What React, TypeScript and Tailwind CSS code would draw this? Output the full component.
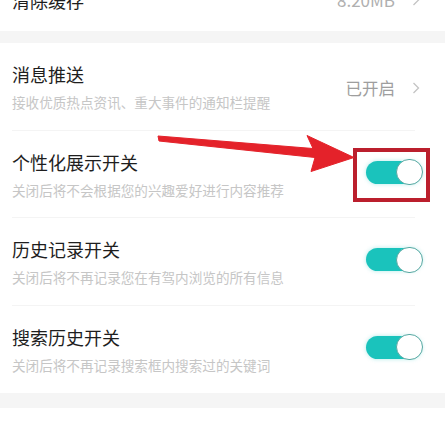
import { ReactNode } from 'react';

const font = { fontFamily: '"Noto Sans CJK SC", "Noto Sans", sans-serif' };

const Chevron = () => (
  <svg width="8" height="12" viewBox="0 0 8 12" className="ml-[17px]">
    <polyline points="1.5,1 6.5,6 1.5,11" fill="none" stroke="#c4c4c4" strokeWidth="1.3" />
  </svg>
);

const Toggle = () => (
  <div className="-mt-[4px] flex h-[23px] w-[56px] items-center justify-end rounded-full bg-[#1ac3bc] shadow-[0_0_4px_rgba(26,195,188,0.35)]">
    <div className="-mr-[1px] h-[26px] w-[27px] rounded-full border border-[#58a8a2] bg-white" />
  </div>
);

type RowProps = {
  title: string;
  desc: string;
  right: ReactNode;
  divider?: boolean;
};

const Row = ({ title, desc, right, divider }: RowProps) => (
  <div className="relative flex h-[87.5px] items-center pl-3 pr-[23px]">
    <div className="flex flex-1 flex-col">
      <div className="text-[18px] leading-[24px] text-[#1e1e1e]">{title}</div>
      <div className="mt-[7px] text-[13.6px] leading-[18px] text-[#c6c6c6]">{desc}</div>
    </div>
    <div className="flex items-center">{right}</div>
    {divider && <div className="absolute bottom-0 left-3 right-[30px] h-px bg-[#f4f4f4]" />}
  </div>
);

export default function App() {
  return (
    <div className="relative h-[426px] w-[445px] overflow-hidden bg-white" style={font}>
      <div className="flex h-[31px] items-start justify-between pl-3 pr-[25px]">
        <div className="-mt-[12px] text-[18px] leading-[24px] text-[#1e1e1e]">清除缓存</div>
        <div className="-mt-[12px] flex h-[24px] items-center">
          <span className="text-[17px] text-[#b0b0b0]">8.20MB</span>
          <Chevron />
        </div>
      </div>
      <div className="h-[12px] bg-[#f5f5f5]" />
      <div className="flex flex-col">
        <Row
          title="消息推送"
          desc="接收优质热点资讯、重大事件的通知栏提醒"
          divider
          right={
            <div className="mr-[2px] mt-[2px] flex items-center">
              <span className="text-[16.5px] leading-[20px] text-[#9e9e9e]">已开启</span>
              <Chevron />
            </div>
          }
        />
        <Row
          title="个性化展示开关"
          desc="关闭后将不会根据您的兴趣爱好进行内容推荐"
          divider
          right={<Toggle />}
        />
        <Row
          title="历史记录开关"
          desc="关闭后将不再记录您在有驾内浏览的所有信息"
          divider
          right={<Toggle />}
        />
        <Row title="搜索历史开关" desc="关闭后将不再记录搜索框内搜索过的关键词" right={<Toggle />} />
      </div>
      <div className="h-[15px] bg-[#f5f5f5]" />

      {/* annotation overlay */}
      <div className="absolute left-[353px] top-[148px] h-[54px] w-[77px] border-[4px] border-[#bb1f2d]" />
      <svg className="absolute left-0 top-0" width="445" height="426" viewBox="0 0 445 426">
        <polygon
          points="158,136 313,148.5 307,135.5 354,157.5 311,171.5 315,157.5 159,141"
          fill="#e4222a"
          strokeLinejoin="round"
          stroke="#e4222a"
          strokeWidth="1"
        />
      </svg>
    </div>
  );
}
